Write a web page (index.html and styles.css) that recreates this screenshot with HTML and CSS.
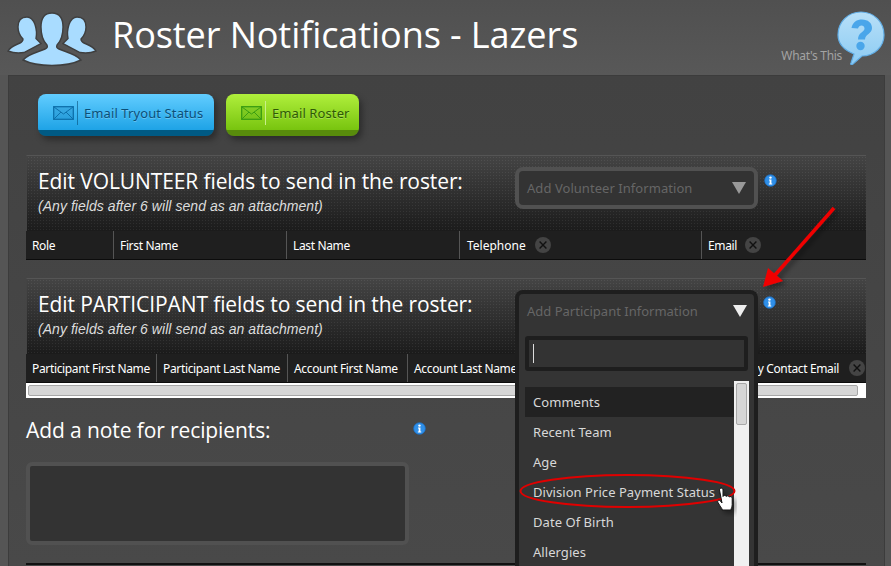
FILE: index.html
```html
<!DOCTYPE html>
<html lang="en">
<head>
<meta charset="utf-8">
<title>Roster Notifications - Lazers</title>
<link rel="stylesheet" href="styles.css">
</head>
<body>
<svg width="0" height="0" class="defs">
  <defs>
    <symbol id="info" viewBox="0 0 14 14">
      <circle cx="7" cy="7" r="6.3" fill="#2f8fe8" stroke="#1c6fc4" stroke-width=".8"/>
      <circle cx="7" cy="3.9" r="1.3" fill="#fff"/>
      <path d="M5.4 6h2.6v4.1h.9v1.1H5.2v-1.1h.9V7.1h-.7z" fill="#fff"/>
    </symbol>
    <symbol id="close" viewBox="0 0 16 16">
      <circle cx="8" cy="8" r="8" fill="#444"/>
      <path d="M4.600 4.600l6.800 6.800M11.400 4.600l-6.800 6.800" stroke="#111" stroke-width="1.400"/>
    </symbol>
    <symbol id="mail" viewBox="0 0 21 14">
      <rect x=".7" y=".7" width="19.600" height="12.600" fill="currentColor" fill-opacity=".25" stroke="currentColor" stroke-width="1.300"/>
      <path d="M1 1l9.500 7L20 1M1 13l7-7M20 13l-7-7" fill="none" stroke="currentColor" stroke-width="1"/>
    </symbol>
  </defs>
</svg>
<header class="top">
  <svg class="logo" width="100" height="70" viewBox="5 5 100 70">
    <g fill="#a9dcff" stroke="#3f3f3f" stroke-width="1.400">
      <path d="M27 17c-6 0-9 4-9 10 0 5 2 9 5 12 0 2-1 3-3 4-4 2-9 3-12 8 5 2 10 2.500 16 1.500l17-9-5-5c1-5 0-11-1-14-1.500-4-4-7.500-8-7.500z"/>
      <path transform="translate(104) scale(-1 1)" d="M27 17c-6 0-9 4-9 10 0 5 2 9 5 12 0 2-1 3-3 4-4 2-9 3-12 8 5 2 10 2.500 16 1.500l17-9-5-5c1-5 0-11-1-14-1.500-4-4-7.500-8-7.500z"/>
      <path d="M52 13c-8 0-11 6-11 14 0 8 3 15 6 18 1 2 0 3-2 4-6 3-16 4-22 11 8 4 18 5.500 29 5.500s21-1.500 29-5.500c-6-7-16-8-22-11-2-1-3-2-2-4 3-3 6-10 6-18 0-8-3-14-11-14z"/>
    </g>
  </svg>
  <h1 class="title">Roster Notifications - Lazers</h1>
  <div class="help">
    <span class="help-label">What's This</span>
    <svg class="help-icon" width="48" height="54" viewBox="0 0 48 54">
      <defs><linearGradient id="bub" x1="0" y1="0" x2="0" y2="1"><stop offset="0" stop-color="#b8e0f8"/><stop offset="1" stop-color="#8ccbf3"/></linearGradient></defs>
      <path d="M24 1c13 0 23 10 23 23 0 12-10 21-22 21l-9 8c-1.500 1-3 .5-2-1l3-9C7 39 1 32 1 24 1 11 11 1 24 1z" fill="url(#bub)" stroke="#62aee6" stroke-width="1.200"/>
      <path d="M14.500 17c1-6 5.500-8.500 10.500-8.500 6 0 10 3.500 10 8.500 0 6-7 6-7 11.500h-7c0-7 6.500-7.500 6.500-11 0-2-1.500-3-3-3s-3 1-3.500 3z" fill="#4aa6ea"/>
      <circle cx="23.500" cy="35" r="4.200" fill="#4aa6ea"/>
    </svg>
  </div>
</header>
<main class="panel">
  <div class="actions">
    <button class="btn btn-blue" type="button"><span class="btn-ico"><svg width="21" height="14"><use href="#mail"/></svg></span>Email Tryout Status</button>
    <button class="btn btn-green" type="button"><span class="btn-ico"><svg width="21" height="14"><use href="#mail"/></svg></span>Email Roster</button>
  </div>

  <section class="group">
    <div class="group-head">
      <div class="group-text">
        <h2 class="group-title">Edit VOLUNTEER fields to send in the roster:</h2>
        <p class="group-sub">(Any fields after 6 will send as an attachment)</p>
      </div>
      <div class="select">
        <span>Add Volunteer Information</span><i class="caret caret-dim"></i>
      </div>
      <svg class="info info-head" width="13" height="13"><use href="#info"/></svg>
    </div>
    <div class="cols">
      <div class="col col-role">Role</div>
      <div class="col col-first">First Name</div>
      <div class="col col-last">Last Name</div>
      <div class="col col-tel">Telephone<svg class="x" width="16" height="16"><use href="#close"/></svg></div>
      <div class="col col-mail">Email<svg class="x" width="16" height="16"><use href="#close"/></svg></div>
    </div>
  </section>

  <section class="group group-two">
    <div class="group-head">
      <div class="group-text">
        <h2 class="group-title">Edit PARTICIPANT fields to send in the roster:</h2>
        <p class="group-sub">(Any fields after 6 will send as an attachment)</p>
      </div>
      <svg class="info info-head2" width="13" height="13"><use href="#info"/></svg>
    </div>
    <div class="cols">
      <div class="col col-p1">Participant First Name</div>
      <div class="col col-p2">Participant Last Name</div>
      <div class="col col-p3">Account First Name</div>
      <div class="col col-p4">Account Last Name</div>
      <div class="col col-p5">Primary Contact Email<svg class="x" width="16" height="16"><use href="#close"/></svg></div>
    </div>
    <div class="hscroll"><div class="hscroll-thumb"></div></div>

    <div class="drop">
      <div class="drop-head"><span>Add Participant Information</span><i class="caret"></i></div>
      <div class="drop-search"><span class="text-cursor"></span></div>
      <div class="drop-body">
        <ul class="drop-list">
          <li class="is-active">Comments</li>
          <li>Recent Team</li>
          <li>Age</li>
          <li>Division Price Payment Status</li>
          <li>Date Of Birth</li>
          <li>Allergies</li>
        </ul>
        <div class="vscroll"><div class="vscroll-thumb"></div></div>
      </div>
    </div>
  </section>

  <div class="note-head">
    <h2 class="note-title">Add a note for recipients:</h2>
    <svg class="info" width="13" height="13"><use href="#info"/></svg>
  </div>
  <div class="note-box"></div>
  <div class="foot-rule"></div>
</main>

<svg class="marks" width="891" height="566" viewBox="0 0 891 566">
  <defs><filter id="sh" x="-30%" y="-30%" width="160%" height="160%"><feDropShadow dx="3" dy="3" stdDeviation="2.500" flood-color="#000" flood-opacity=".4"/></filter></defs>
  <g filter="url(#sh)">
    <path d="M834 208L775 275" stroke="#f00000" stroke-width="3.500" fill="none"/>
    <path d="M763 287L768 268 783 281z" fill="#f00000"/>
  </g>
  <ellipse cx="627.500" cy="491" rx="107" ry="16" fill="none" stroke="#e00000" stroke-width="2"/>
  <g filter="url(#sh)">
    <path d="M719.500 490c0-2.500 3.500-2.500 3.500 0v6.500c.5-1.500 3-1.500 3.200 0 .5-1 2.800-1 3 .5.800-.8 3-.5 3 1v6.500c0 2.500-1 3.500-1.300 5.500h-8.400c-1-2.500-2-3-4.500-7.500-1-2 1-3 2.500-1.500l1.500 2z" fill="#fff" stroke="#111" stroke-width="1"/>
  </g>
</svg>
</body>
</html>
```
FILE: styles.css
```css
* { box-sizing: border-box; }
html, body { margin: 0; padding: 0; height: 566px; overflow: hidden; }
body {
  background: #555;
  font-family: "Noto Sans", sans-serif;
  color: #fff;
  position: relative;
}
.defs { position: absolute; }

.top {
  height: 75px;
  display: flex;
  align-items: flex-start;
  background: linear-gradient(#505050, #585858);
}
.logo { margin: 5px 0 0 5px; flex: none; }
.title {
  margin: 11px 0 0 7px;
  font: 400 36.100px/46px "Open Sans", sans-serif;
  letter-spacing: -.1px;
  white-space: nowrap;
  flex: 1;
}
.help { display: flex; align-items: flex-start; margin: 11px 6px 0 0; }
.help-label {
  margin-top: 37px;
  font: 12px/16px "Noto Sans", sans-serif;
  letter-spacing: -.3px;
  color: #a3a3a3;
}
.help-icon { margin-left: -5px; }

.panel {
  width: 877px;
  height: 491px;
  margin-left: 8px;
  padding: 18px 0 0 17px;
  background: linear-gradient(#424242, #494949);
  border-top: 1px solid #3c3c3c;
  border-left: 1px solid #3c3c3c;
  border-right: 1px solid #3c3c3c;
}
.actions { display: flex; gap: 12px; margin-left: 12px; height: 42px; }
.btn {
  height: 42px;
  padding: 0 0 5px 15px;
  border: 0;
  border-radius: 8px;
  display: flex;
  align-items: center;
  font: 13px/16px "Noto Sans", sans-serif;
  letter-spacing: .1px;
  text-shadow: 0 1px 0 rgba(255,255,255,.25);
  box-shadow: 3px 4px 6px rgba(0,0,0,.35);
}
.btn-blue {
  width: 176px;
  color: #0b4f78;
  background: linear-gradient(#62cdff, #1ea3e6 36px, #005a84 36px);
}
.btn-green {
  width: 133px;
  color: #2f5a05;
  background: linear-gradient(#b0ef3c, #78c40f 36px, #588c0c 36px);
}
.btn-ico {
  display: flex;
  align-items: center;
  height: 24px;
  padding-right: 3px;
  margin-right: 6px;
  border-right: 1px solid rgba(0,70,110,.55);
}
.btn-blue .btn-ico svg { color: #0d70ab; }
.btn-green .btn-ico { border-right-color: #c8ef8a; }
.btn-green .btn-ico svg { color: #3a9c12; }

.group { position: relative; width: 840px; margin-top: 19px; }
.group-two { margin-top: 18px; }
.group-head {
  height: 76px;
  display: flex;
  align-items: flex-start;
  padding-left: 11px;
  border-top: 1px solid #555;
  border-left: 1px solid #444;
  background:
    radial-gradient(circle, rgba(255,255,255,.07) 1px, transparent 1px) 0 0 / 3px 3px,
    linear-gradient(#444, #1b1b1b);
}
.group-text { width: 477px; flex: none; }
.group-title {
  margin: 11px 0 0;
  font: 400 21px/29px "Open Sans", sans-serif;
  white-space: nowrap;
  letter-spacing: -.1px;
}
.group-sub {
  margin: 2px 0 0;
  font: italic 14px/17px "Liberation Sans", sans-serif;
  letter-spacing: .05px;
  color: #ddd;
}
.select {
  width: 243px;
  height: 42px;
  margin-top: 11px;
  padding: 0 12px;
  display: flex;
  align-items: center;
  justify-content: space-between;
  font: 13px/16px "Noto Sans", sans-serif;
  color: #666;
  background: #333;
  border: 4px solid #515151;
  border-radius: 8px;
  letter-spacing: .05px;
}
.select span { margin-left: -4px; }
.caret {
  width: 0; height: 0;
  margin-right: -4px;
  border-left: 7px solid transparent;
  border-right: 7px solid transparent;
  border-top: 12px solid #eee;
}
.caret-dim { border-top-color: #999; }
.info { display: block; }
.info-head { margin: 18px 0 0 6px; }
.info-head2 { position: absolute; left: 737px; top: 18px; }

.cols {
  display: flex;
  height: 29px;
  background: #1f1f1f;
  border-bottom: 1px solid #0c0c0c;
  overflow: hidden;
}
.col {
  flex: none;
  display: flex;
  align-items: center;
  padding: 1px 0 0 6px;
  font: 12px/16px "Noto Sans", sans-serif;
  letter-spacing: -.35px;
  white-space: nowrap;
  border-right: 1px solid #555;
}
.col:last-child { border-right: 0; }
.x { margin-left: 10px; flex: none; margin-top: -1px; }
.col-role { width: 88px; }
.col-first { width: 173px; }
.col-last { width: 173px; }
.col-tel { width: 242px; padding-left: 7px; letter-spacing: 0; }
.col-tel .x { margin-left: 9px; }
.col-mail { width: 164px; }
.col-mail .x { margin-left: 8px; }
.col-p1 { width: 131px; }
.col-p2 { width: 131px; }
.col-p3 { width: 120px; }
.col-p4 { width: 312px; }
.col-p5 { width: 146px; padding-left: 0; justify-content: flex-end; padding-right: 1px; }
.hscroll {
  height: 15px;
  background: #fff;
  padding: 2px 8px 2px 2px;
}
.hscroll-thumb {
  height: 11px;
  background: #d6d6d6;
  border: 1px solid #a8a8a8;
  border-radius: 2px;
}

.drop {
  position: absolute;
  left: 489px;
  top: 12px;
  width: 243px;
  height: 290px;
  background: #343434;
  border: 4px solid #1e1e1e;
  border-bottom: 0;
  border-radius: 8px 8px 0 0;
}
.drop-head {
  height: 34px;
  padding: 0 7px 0 8px;
  display: flex;
  align-items: center;
  justify-content: space-between;
  font: 13px/16px "Noto Sans", sans-serif;
  color: #666;
}
.drop-head .caret { margin-right: 0; }
.drop-search {
  height: 35px;
  margin: 8px 6px 0;
  padding: 8px 4px;
  background: #333;
  border: 4px solid #1e1e1e;
  border-radius: 3px;
}
.text-cursor { display: block; width: 1px; height: 19px; margin-top: -4px; background: #ddd; }
.drop-body { display: flex; margin: 16px 4px 0 6px; }
.drop-list {
  list-style: none;
  margin: 0;
  padding: 0;
  width: 209px;
  font: 13px/30px "Noto Sans", sans-serif;
  color: #d8d8d8;
  letter-spacing: .05px;
}
.drop-list li { height: 30px; padding-left: 8px; white-space: nowrap; }
.drop-list .is-active { background: #222; }
.vscroll {
  width: 15px;
  margin-top: -6px;
  height: 200px;
  background: #f0f0f0;
  padding: 2px 2px;
}
.vscroll-thumb {
  height: 42px;
  background: #d6d6d6;
  border: 1px solid #a8a8a8;
  border-radius: 2px;
}

.note-head {
  width: 400px;
  display: flex;
  align-items: flex-start;
  justify-content: space-between;
  margin-top: 16px;
  height: 48px;
}
.note-title {
  margin: 1px 0 0;
  font: 400 21px/30px "Open Sans", sans-serif;
  letter-spacing: -.1px;
}
.note-head .info { margin-top: 8px; }
.note-box {
  width: 383px;
  height: 83px;
  background: #333;
  border: 4px solid #515151;
  border-radius: 6px;
}
.foot-rule { width: 840px; height: 2px; margin-top: 18px; background: #111; }

.marks { position: absolute; left: 0; top: 0; pointer-events: none; }
```
